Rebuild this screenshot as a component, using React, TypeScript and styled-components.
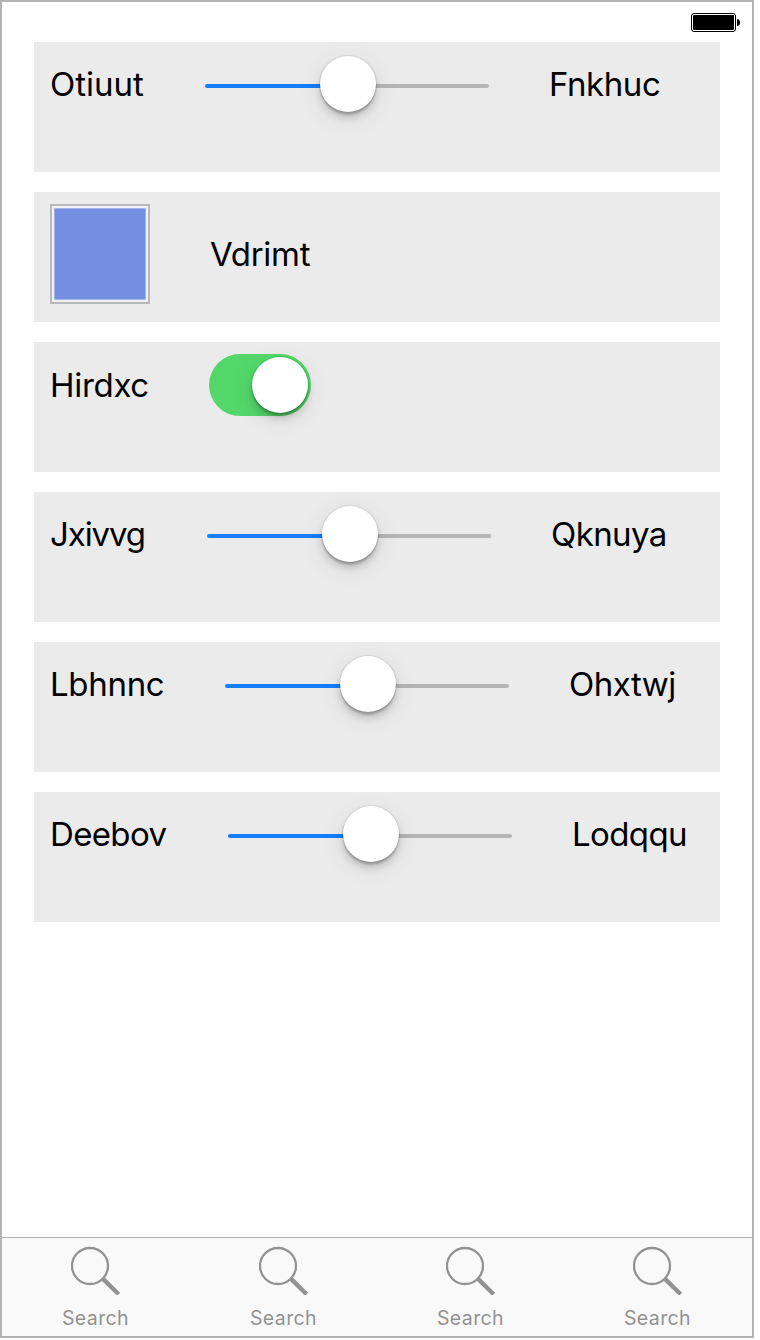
import React from "react";
import styled, { createGlobalStyle } from "styled-components";

const GlobalStyle = createGlobalStyle`
  * { box-sizing: border-box; }
  body { margin: 0; background: #fff; }
`;

const Screen = styled.div`
  width: 754px;
  height: 1338px;
  display: flex;
  flex-direction: column;
  border: 2px solid #b3b3b3;
  background: #fff;
  color: #000;
  font-family: Inter, "Liberation Sans", sans-serif;
`;

const StatusBar = styled.header`
  height: 40px;
  flex: none;
  display: flex;
  justify-content: flex-end;
  padding: 11px 11px 0 0;
`;

const Settings = styled.main`
  flex: 1;
  display: flex;
  flex-direction: column;
  gap: 20px;
  padding: 0 32px;
`;

const Row = styled.section`
  width: 686px;
  height: 130px;
  display: flex;
  align-items: flex-start;
  gap: 60px;
  padding: 12px 16px;
  background: #ebebeb;
`;

const Label = styled.span<{ $width?: number; $spacing?: number; $top?: number }>`
  flex: none;
  width: ${({ $width }) => ($width ? `${$width}px` : "auto")};
  margin-top: ${({ $top = 10 }) => $top}px;
  font-size: 33px;
  line-height: 40px;
  letter-spacing: ${({ $spacing = -0.3 }) => $spacing}px;
  white-space: nowrap;
`;

const Track = styled.div`
  width: 284px;
  height: 4px;
  flex: none;
  display: flex;
  align-items: center;
  margin-top: 30px;
  border-radius: 2px;
  background: linear-gradient(to right, #157efb 50%, #b5b5b5 50%);
`;

const Knob = styled.div`
  width: 56px;
  height: 56px;
  flex: none;
  border-radius: 50%;
  background: #fff;
  box-shadow: 0 0 1px 1px rgba(0, 0, 0, 0.08), 0 3px 2px rgba(0, 0, 0, 0.18),
    0 6px 8px rgba(0, 0, 0, 0.16), 0 6px 28px rgba(0, 0, 0, 0.07);
`;

const SliderKnob = styled(Knob)`
  margin: -4px 0 0 115px;
`;

const Switch = styled.div`
  width: 102px;
  height: 62px;
  display: flex;
  justify-content: flex-end;
  padding: 3px;
  border-radius: 31px;
  background: #53d769;
`;

const Swatch = styled.div`
  width: 100px;
  height: 100px;
  border: 2px solid #b9b9b9;
  background: #758fe2;
  box-shadow: inset 0 0 0 2px #f0f1f5, inset 0 0 0 3px #a3b4ed;
`;

const TabBar = styled.nav`
  height: 99px;
  flex: none;
  display: grid;
  grid-template-columns: 188px 188px 186px 188px;
  border-top: 1px solid #b2b2b2;
  background: #f9f9f9;
`;

const Tab = styled.div`
  display: flex;
  flex-direction: column;
  align-items: center;
  padding-top: 7px;
  color: #929292;
`;

const TabLabel = styled.span`
  margin: 11px 1px 0 0;
  font-size: 19.5px;
  line-height: 24px;
  letter-spacing: 0.4px;
`;

const Battery = () => (
  <svg width="50" height="20" viewBox="0 0 50 20" fill="none">
    <rect x="0.5" y="0.5" width="44" height="18" rx="2.5" stroke="#000" />
    <rect x="2" y="2" width="41" height="15" rx="1" fill="#000" />
    <path d="M46 6c1.8 0 3 1.5 3 3.500S47.800 13 46 13z" fill="#000" />
  </svg>
);

const SearchIcon = () => (
  <svg width="50" height="50" viewBox="0 0 50 50" fill="none" stroke="#929292">
    <circle cx="19" cy="21" r="18" strokeWidth="2.3" />
    <path d="M31.800 33.600L47.600 49.200" strokeWidth="4.300" />
  </svg>
);

type SliderRowProps = {
  label: string;
  value: string;
  width: number;
  labelSpacing?: number;
  valueSpacing?: number;
};

const SliderRow = ({ label, value, width, labelSpacing, valueSpacing }: SliderRowProps) => (
  <Row>
    <Label $width={width} $spacing={labelSpacing}>{label}</Label>
    <Track>
      <SliderKnob />
    </Track>
    <Label $spacing={valueSpacing}>{value}</Label>
  </Row>
);

export default function App() {
  return (
    <>
      <GlobalStyle />
      <Screen>
        <StatusBar>
          <Battery />
        </StatusBar>
        <Settings>
          <SliderRow label="Otiuut" value="Fnkhuc" width={95} labelSpacing={0} valueSpacing={-0.45} />
          <Row>
            <Swatch />
            <Label $top={30}>Vdrimt</Label>
          </Row>
          <Row>
            <Label $width={99} $top={11}>Hirdxc</Label>
            <Switch>
              <Knob />
            </Switch>
          </Row>
          <SliderRow label="Jxivvg" value="Qknuya" width={97} labelSpacing={-1.1} valueSpacing={-0.6} />
          <SliderRow label="Lbhnnc" value="Ohxtwj" width={115} valueSpacing={-0.5} />
          <SliderRow label="Deebov" value="Lodqqu" width={118} labelSpacing={-0.65} valueSpacing={-0.6} />
        </Settings>
        <TabBar>
          {[0, 1, 2, 3].map((tab) => (
            <Tab key={tab}>
              <SearchIcon />
              <TabLabel>Search</TabLabel>
            </Tab>
          ))}
        </TabBar>
      </Screen>
    </>
  );
}
